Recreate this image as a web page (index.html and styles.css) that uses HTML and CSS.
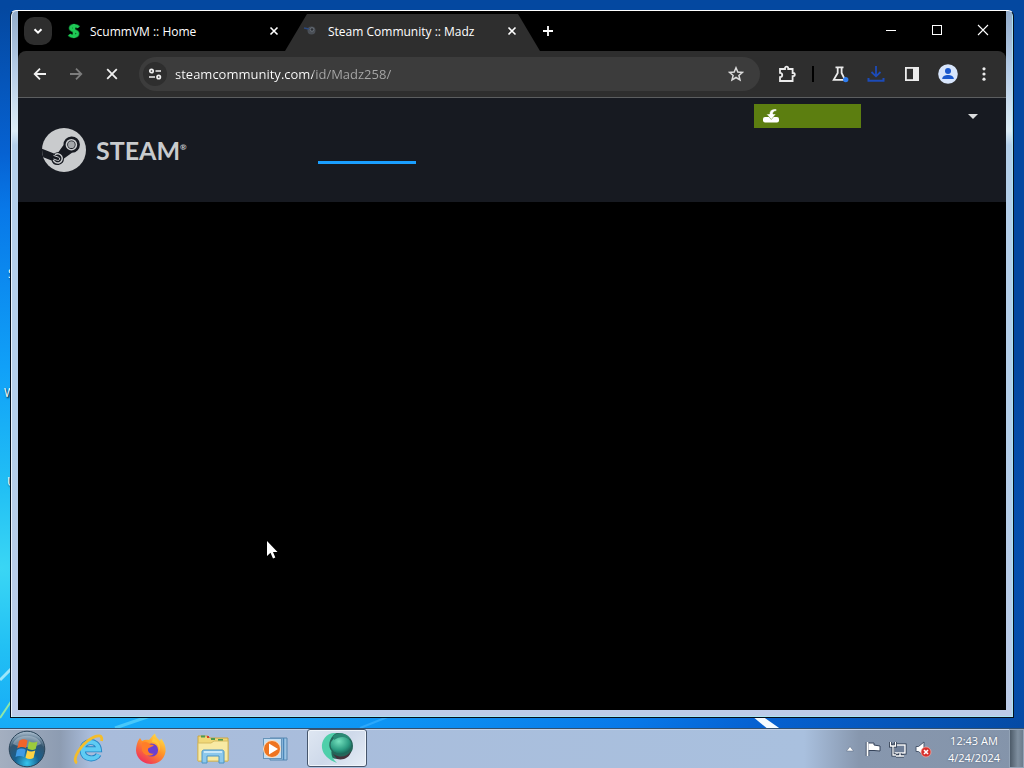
FILE: index.html
```html
<!DOCTYPE html>
<html lang="en">
<head>
  <meta charset="UTF-8">
  <title>Steam Community :: Madz</title>
  <meta name="viewport" content="width=device-width, initial-scale=1.0">
  <link rel="stylesheet" href="styles.css">
</head>
<body>
  <main class="desktop">
    <!-- wallpaper light streaks -->
    <svg class="wallpaper" viewBox="0 0 1024 768" preserveAspectRatio="none" aria-hidden="true">
      <path d="M0 680 L12 668" stroke="#9ce6fa" stroke-width="3"/>
      <path d="M0 718 L12 700" stroke="#8fe8a8" stroke-width="2"/>
      <path d="M115 728 L150 716" stroke="#48c8fa" stroke-width="3"/>
      <path d="M360 728 L390 716" stroke="#2ca8fb" stroke-width="2"/>
      <path d="M752 716 L762 716 L782 730 L769 730 Z" fill="#f4fbff"/>
    </svg>
    <span class="shortcut shortcut-s">S</span>
    <span class="shortcut shortcut-w">W</span>
    <span class="shortcut shortcut-u">U</span>

    <section class="window">
      <div class="browser">
        <div class="tabstrip">
          <button class="tab-search" aria-label="Search tabs">
            <svg width="12" height="12" viewBox="0 0 12 12"><path d="M2.5 4.2 L6 7.7 L9.500 4.2" fill="none" stroke="#fff" stroke-width="2"/></svg>
          </button>
          <div class="tab">
            <svg class="favicon" width="14" height="16" viewBox="0 0 14 16"><path d="M11.500 4.500 C10 2.200 4 1.800 3.600 5 C3.400 8.200 10.800 7.300 10.600 10.700 C10.300 14.200 4 14 2.300 11.500" fill="none" stroke="#0b6b2c" stroke-width="4"/><path d="M11.500 4.500 C10 2.200 4 1.800 3.600 5 C3.400 8.200 10.800 7.300 10.600 10.700 C10.300 14.200 4 14 2.300 11.500 M7 1 V15" fill="none" stroke="#1fc955" stroke-width="2.600"/></svg>
            <span class="tab-title">ScummVM :: Home</span>
            <button class="tab-close" aria-label="Close tab">
              <svg width="10" height="10" viewBox="0 0 10 10"><path d="M1.500 1.500 L8.500 8.500 M8.500 1.500 L1.500 8.500" stroke="#fff" stroke-width="1.600"/></svg>
            </button>
          </div>
          <div class="tab active">
            <svg class="favicon" width="16" height="16" viewBox="0 0 16 16"><circle cx="8.500" cy="7.500" r="4" fill="#4a4f56"/><circle cx="9" cy="6.500" r="1.800" fill="#2c3036" stroke="#6a7078"/><path d="M1 5 L6 6" stroke="#2c4a80" stroke-width="1.500"/></svg>
            <span class="tab-title">Steam Community :: Madz</span>
            <button class="tab-close" aria-label="Close tab">
              <svg width="10" height="10" viewBox="0 0 10 10"><path d="M1.500 1.500 L8.500 8.500 M8.500 1.500 L1.500 8.500" stroke="#fff" stroke-width="1.600"/></svg>
            </button>
          </div>
          <button class="new-tab" aria-label="New tab">
            <svg width="12" height="12" viewBox="0 0 12 12"><path d="M6 1 V11 M1 6 H11" stroke="#fff" stroke-width="1.800"/></svg>
          </button>
          <div class="controls">
            <button aria-label="Minimize"><svg width="12" height="12" viewBox="0 0 12 12"><path d="M1 6.500 H11" stroke="#fff"/></svg></button>
            <button aria-label="Maximize"><svg width="12" height="12" viewBox="0 0 12 12"><rect x="1.500" y="1.500" width="9" height="9" fill="none" stroke="#fff"/></svg></button>
            <button aria-label="Close"><svg width="12" height="12" viewBox="0 0 12 12"><path d="M1 1 L11 11 M11 1 L1 11" stroke="#fff" stroke-width="1.100"/></svg></button>
          </div>
        </div>

        <div class="toolbar">
          <button class="tool" aria-label="Back"><svg width="16" height="16" viewBox="0 0 16 16"><path d="M14 8 H3 M8 2.700 L2.700 8 L8 13.300" fill="none" stroke="#f0f0f0" stroke-width="1.800"/></svg></button>
          <button class="tool" aria-label="Forward"><svg width="16" height="16" viewBox="0 0 16 16"><path d="M2 8 H13 M8 2.700 L13.300 8 L8 13.300" fill="none" stroke="#7c7c7c" stroke-width="1.800"/></svg></button>
          <button class="tool" aria-label="Stop"><svg width="16" height="16" viewBox="0 0 16 16"><path d="M3.200 3.200 L12.800 12.800 M12.800 3.200 L3.200 12.800" stroke="#f0f0f0" stroke-width="1.800"/></svg></button>
          <div class="omnibox">
            <button class="site-info" aria-label="Site information">
              <svg width="14" height="14" viewBox="0 0 14 14" fill="none" stroke="#f0f0f0" stroke-width="1.700"><circle cx="3.500" cy="4" r="1.700"/><path d="M7.500 4 H13 M1 10 H7"/><circle cx="10.700" cy="10" r="1.700"/></svg>
            </button>
            <input class="url" type="text" value="steamcommunity.com/id/Madz258/" aria-label="Address">
            <button class="star" aria-label="Bookmark">
              <svg width="16" height="16" viewBox="0 0 16 16"><path d="M8 1.800 L9.800 6 L14.400 6.400 L10.900 9.400 L12 14 L8 11.500 L4 14 L5.100 9.400 L1.600 6.400 L6.200 6 Z" fill="none" stroke="#dcdcdc" stroke-width="1.500"/></svg>
            </button>
          </div>
          <button class="tool" aria-label="Extensions"><svg width="18" height="18" viewBox="0 0 18 18"><path d="M2 4 H7 V3.200 A1.600 1.600 0 0 1 10.200 3.200 V4 H14.600 V8 H15.200 A1.600 1.600 0 0 1 15.200 11.200 H14.600 V16 H2 V12.200 C5 12 5 8 2 7.800 Z" fill="none" stroke="#ececec" stroke-width="1.800"/></svg></button>
          <span class="separator"></span>
          <button class="tool" aria-label="Labs"><svg width="18" height="18" viewBox="0 0 18 18"><path d="M4.500 2.300 H12.500 M6.700 2.500 V8 L2.700 14.800 H14 L10.600 8 V2.500" fill="none" stroke="#ececec" stroke-width="1.800"/><circle cx="14.700" cy="14.600" r="2.700" fill="#2f7df0"/></svg></button>
          <button class="tool" aria-label="Downloads"><svg width="18" height="18" viewBox="0 0 18 18"><path d="M9 1 V11 M4.500 7 L9 11.300 L13.500 7" fill="none" stroke="#1c4bb8" stroke-width="1.800"/><path d="M1.500 13 V15.800 H16.500 V13" fill="none" stroke="#1c4bb8" stroke-width="2"/></svg></button>
          <button class="tool" aria-label="Side panel"><svg width="16" height="16" viewBox="0 0 16 16"><rect x="1.900" y="1.900" width="12.200" height="12.200" fill="none" stroke="#ececec" stroke-width="1.800"/><rect x="9" y="2" width="5" height="12" fill="#ececec"/></svg></button>
          <button class="tool" aria-label="Profile"><svg width="20" height="20" viewBox="0 0 20 20"><circle cx="10" cy="10" r="9.800" fill="#d8e6fc"/><circle cx="10" cy="7" r="3" fill="#1a58cc"/><path d="M4.200 15 C4.200 9.800 15.800 9.800 15.800 15 Z" fill="#1a58cc"/></svg></button>
          <button class="tool" aria-label="Menu"><svg width="16" height="16" viewBox="0 0 16 16" fill="#ececec"><circle cx="8" cy="2.800" r="1.600"/><circle cx="8" cy="8" r="1.600"/><circle cx="8" cy="13.200" r="1.600"/></svg></button>
        </div>

        <div class="page">
          <header class="site-header">
            <a class="logo" href="#">
              <svg width="44" height="44" viewBox="0 0 44 44">
                <defs><clipPath id="disc"><circle cx="22" cy="22" r="22"/></clipPath></defs>
                <circle cx="22" cy="22" r="22" fill="#c9cbcd"/>
                <g clip-path="url(#disc)" fill="#171a21">
                  <path d="M-2 20 L12 25.500 C13.500 24.500 15 24 16.500 24 L21.500 17 A8.200 8.200 0 1 1 30 24.800 L22 30.500 A6.400 6.400 0 0 1 9.500 32.500 L-2 28 Z"/>
                </g>
                <circle cx="29.400" cy="16.700" r="5" fill="#171a21" stroke="#c9cbcd" stroke-width="1.600"/>
                <circle cx="29.400" cy="16.700" r="3.400" fill="#a4a7aa"/>
                <path d="M13 26.600 A4.600 4.600 0 1 1 11.300 32" fill="none" stroke="#c9cbcd" stroke-width="1.400"/>
                <path d="M11.500 27.400 L16.500 29.200 A1.600 1.600 0 0 1 15.500 32.400 L11.500 31" fill="none" stroke="#c9cbcd" stroke-width="1"/>
              </svg>
              <span class="logo-name">STEAM<sup>®</sup></span>
            </a>
            <nav class="site-nav"><a href="#" aria-label="Community"></a></nav>
            <div class="actions">
              <a class="install" href="#" aria-label="Install Steam">
                <svg width="18" height="16" viewBox="0 0 18 16"><rect x="1" y="9" width="16" height="5.500" rx="2" fill="#fff"/><path d="M14.500 1 C10 0.700 7.500 2.500 7.500 6 H4.500 L9.300 11.500 L14 6 H11 C11 4 12 3 14.500 3 Z" fill="#fff" stroke="#5c7e10" stroke-width="0.500"/></svg>
              </a>
              <button class="account" aria-label="Account menu"></button>
            </div>
          </header>
        </div>
      </div>
    </section>
  </main>

  <footer class="taskbar">
    <button class="start" aria-label="Start">
      <svg width="38" height="38" viewBox="0 0 38 38">
        <defs>
          <radialGradient id="orb" cx="0.5" cy="0.900" r="0.850"><stop offset="0" stop-color="#35c6ee"/><stop offset="0.400" stop-color="#17608f"/><stop offset="0.750" stop-color="#33556f"/><stop offset="1" stop-color="#9db2c4"/></radialGradient>
        </defs>
        <circle cx="19" cy="19" r="17.800" fill="url(#orb)" stroke="#2a4459"/>
        <path d="M5 14 C8 3 30 3 33 14 C26 18 12 18 5 14 Z" fill="#e8f1f8" opacity="0.350"/>
        <path d="M11 11 C14 8.500 17 9 19.500 10.500 L18 18 C15 16.500 12 16.500 9.200 18.500 Z" fill="#f0642a"/>
        <path d="M21 11.300 C24 13 26.500 13 29.500 11.500 L27.700 19 C25 20.500 22 20 19.500 18.500 Z" fill="#9ccb3c"/>
        <path d="M8.900 20 C12 18 15 18.200 17.700 19.800 L16 27 C13 25.500 10 25.500 7.500 27 Z" fill="#3f9be6"/>
        <path d="M19.200 20.300 C22 22 24.500 21.800 27.300 20.500 L25.500 28 C23 29.700 20 29.300 17.500 27.800 Z" fill="#fdd244"/>
      </svg>
    </button>
    <div class="pins">
      <button class="pin" aria-label="Internet Explorer">
        <svg width="32" height="32" viewBox="0 0 32 32"><path d="M25.500 21.500 C23 27 10.500 27.500 9.500 17.500 C9 7 24.500 6 25.800 16.300 H11" fill="none" stroke="#2484c4" stroke-width="6"/><path d="M25.500 21.500 C23 27 10.500 27.500 9.500 17.500 C9 7 24.500 6 25.800 16.300 H11" fill="none" stroke="#5fcbf3" stroke-width="4.200"/><path d="M4 30 C-2 27 8 11 19 5 C25 1.500 30 2 28.500 8" fill="none" stroke="#f4bd2c" stroke-width="2.800"/></svg>
      </button>
      <button class="pin" aria-label="Firefox">
        <svg width="32" height="32" viewBox="0 0 32 32">
          <defs><linearGradient id="fox" x1="0.900" y1="0.100" x2="0.300" y2="1"><stop offset="0" stop-color="#ffe04a"/><stop offset="0.450" stop-color="#ff9328"/><stop offset="1" stop-color="#f0305c"/></linearGradient></defs>
          <path d="M3 8 L5 5 L7 8 C9 7 12 6.500 14 7 C15.500 5.500 17 3 20 0.500 C20.500 4 23 5.500 25 8 L26 5.500 C30 10 31 15 30.500 19 C29 27 23 31 16 31 C8 31 1.500 25.500 1 17.500 C1 13.500 2 10.500 3 8 Z" fill="url(#fox)"/>
          <circle cx="16.500" cy="17" r="6.600" fill="#6b3fd0"/><path d="M7 10 C10 8 13 9 15 11.500 L19 12 C17 14.500 14 14 13 16 C12.500 19 15 21.500 19 20.500 C15 25 8 22 7 17 Z" fill="#ff7d28"/><path d="M17 9 C23 9 25 15 23.500 19 C27 14 24 7 18 5 Z" fill="#ffc83a"/>
        </svg>
      </button>
      <button class="pin" aria-label="Windows Explorer">
        <svg width="34" height="32" viewBox="0 0 34 32"><path d="M2 3 H12 L14 5 H32 V28 H2 Z" fill="#f0d878" stroke="#c9a646"/><path d="M5 3.500 H9 M15 6 H19 M22 7 H27" stroke="#4c9a52" stroke-width="2"/><path d="M11 4 H13" stroke="#d8402c" stroke-width="2"/><path d="M2 10 H15 L18 8 H32 V28 H2 Z" fill="#f8eaa4" stroke="#d6bb60"/><path d="M6 30 V19 C6 17.500 7 17 8 17 H26 C27.500 17 28 18 28 19 V30 H23 V23 H11 V30 Z" fill="#8cc8ec" stroke="#4a94c4"/><path d="M8 19 H26" stroke="#dff3fc" stroke-width="1.500"/></svg>
      </button>
      <button class="pin" aria-label="Windows Media Player">
        <svg width="28" height="28" viewBox="0 0 28 28"><path d="M9 3 H26 V25 H9 Z" fill="#9cc4e4" stroke="#5686b0"/><path d="M22.500 3 V25" stroke="#4a86b8" stroke-width="1.500"/><rect x="2.500" y="3.500" width="18" height="20" fill="#c4def2" stroke="#6694ba"/><circle cx="11" cy="14" r="8.500" fill="#ee7420" stroke="#fbe0c4"/><path d="M8 8.500 L17 14 L8 19.500 Z" fill="#fff"/></svg>
      </button>
      <button class="pin running" aria-label="Browser">
        <svg width="36" height="34" viewBox="0 0 36 34">
          <defs><radialGradient id="ball" cx="0.400" cy="0.300" r="0.800"><stop offset="0" stop-color="#74e0bd"/><stop offset="0.600" stop-color="#2c9c82"/><stop offset="1" stop-color="#145048"/></radialGradient></defs>
          <ellipse cx="19" cy="15" rx="15" ry="13" fill="#24665a"/><path d="M11 19 C15 27 27 28 32 20 C31 27 24 29.500 18 28 Z" fill="#46323c"/><ellipse cx="22" cy="14" rx="10.500" ry="9" fill="url(#ball)"/><path d="M17 2 C8 1 2 9 3 17 C4 24 10 29 18 32 C14 28 12 25 12.500 20 C9 16 9 8 17 2 Z" fill="#4fcfaa"/><path d="M14 5 C20 0 29 2 32 9 C26 5 21 5 15 9 Z" fill="#2a8975"/>
        </svg>
      </button>
    </div>
    <div class="tray">
      <button class="tray-more" aria-label="Show hidden icons"><svg width="8" height="6" viewBox="0 0 8 6"><path d="M4 0.500 L7.500 5 H0.500 Z" fill="#fff" stroke="#55657c" stroke-width="0.500"/></svg></button>
      <button aria-label="Action Center"><svg width="18" height="18" viewBox="0 0 18 18"><path d="M3.500 2 V16" stroke="#35435a" stroke-width="3.500"/><path d="M4 3 H10 V5 L16 6 V11 L10 10.500 H4 Z" fill="#fff" stroke="#35435a"/><path d="M3.500 2 V16" stroke="#fff" stroke-width="1.800"/></svg></button>
      <button aria-label="Network"><svg width="18" height="18" viewBox="0 0 18 18"><rect x="5" y="5" width="11" height="8" fill="#6f7f98" stroke="#26344a" stroke-width="3"/><rect x="5" y="5" width="11" height="8" fill="#6f7f98" stroke="#fff" stroke-width="1.400"/><path d="M7 16 H15 M11 13 V16" stroke="#26344a" stroke-width="3"/><path d="M7 16 H15 M11 13 V16" stroke="#fff" stroke-width="1.400"/><path d="M1.500 2 V6 H6.500 V2 M4 6 V15 H7" fill="none" stroke="#26344a" stroke-width="3"/><path d="M1.500 2 V6 H6.500 V2 M4 6 V15 H7" fill="none" stroke="#fff" stroke-width="1.300"/></svg></button>
      <button aria-label="Volume muted"><svg width="18" height="18" viewBox="0 0 18 18"><path d="M2 6.500 H4.500 L10 2 V16 L4.500 11.500 H2 Z" fill="#fff" stroke="#4a586e"/><circle cx="12" cy="12" r="5" fill="#d8302c" stroke="#f4b0a8" stroke-width="0.700"/><path d="M10 10 L14 14 M14 10 L10 14" stroke="#fff" stroke-width="1.600"/></svg></button>
    </div>
    <div class="clock"><span>12:43 AM</span><span>4/24/2024</span></div>
    <button class="show-desktop" aria-label="Show desktop"></button>
  </footer>

  <!-- mouse pointer -->
  <svg class="pointer" width="12" height="20" viewBox="0 0 12 20" aria-hidden="true"><path d="M1 1 V16 L4.500 12.800 L7 18.500 L9.300 17.500 L7 12 H11.500 Z" fill="#fff"/></svg>
</body>
</html>
```
FILE: styles.css
```css
* {
  box-sizing: border-box;
}

body {
  margin: 0;
  height: 100vh;
  display: flex;
  flex-direction: column;
  overflow: hidden;
  font-family: "Open Sans", "Noto Sans", sans-serif;
  font-size: 12px;
  color: #fff;
  background: radial-gradient(107% 73% at 0% 74%, #3ad6f4 0%, #22c0f4 14%, #10a0f8 36%, #0878e8 64%, #0662d2 74%, #0448a0 100%);
}

button {
  display: flex;
  align-items: center;
  justify-content: center;
  padding: 0;
  border: 0;
  background: none;
  color: inherit;
  flex: none;
}

svg {
  display: block;
  flex: none;
}

/* Desktop */
.desktop {
  flex: 1;
  min-height: 0;
  display: flex;
  padding: 10px;
}

.wallpaper {
  position: absolute;
  left: 0;
  top: 0;
  width: 100%;
  height: 100%;
}

.shortcut {
  position: absolute;
  line-height: 16px;
  text-shadow: 1px 1px 2px #000;
}

.shortcut-s {
  left: 8px;
  top: 266px;
}

.shortcut-w {
  left: 4px;
  top: 385px;
}

.shortcut-u {
  left: 7px;
  top: 474px;
}

/* Window frame */
.window {
  position: relative;
  flex: 1;
  display: flex;
  padding: 0 6px 7px;
  border: 1px solid #06101c;
  border-top-color: #fff;
  border-radius: 6px 6px 0 0;
  background: linear-gradient(180deg, #93acca 0%, #b4cbe6 8%, #dcecf6 17%, #b4cfea 19%, #b4cfea 60%, #bccbe8 100%);
  box-shadow: inset 1px 0 #e8f2fc, inset -1px -1px #a8e4f4;
}

.browser {
  flex: 1;
  min-width: 0;
  display: flex;
  flex-direction: column;
  margin: 0 1px;
  background: #000;
}

/* Tabs */
.tabstrip {
  display: flex;
  align-items: flex-end;
  height: 40px;
  background: #000;
}

.tab-search {
  width: 28px;
  height: 28px;
  margin: 0 0 6px 6px;
  border-radius: 10px;
  background: #2e2e2e;
}

.tab {
  display: flex;
  align-items: center;
  width: 233px;
  height: 37px;
  padding: 0 3px 3px 15px;
}

.tab.active {
  width: 255px;
  padding: 0 20px 3px 18px;
  background: #2e2e2e;
  clip-path: polygon(22px 0, 233px 0, 100% 100%, 0 100%);
}

.tab-title {
  flex: 1;
  margin-left: 9px;
  font-weight: 500;
  white-space: nowrap;
}

.tab-close {
  width: 16px;
  height: 16px;
}

.new-tab {
  width: 16px;
  height: 40px;
}

.controls {
  display: flex;
  align-self: flex-start;
  margin-left: auto;
}

.controls button {
  width: 46px;
  height: 38px;
}

/* Toolbar */
.toolbar {
  display: flex;
  align-items: center;
  gap: 8px;
  height: 47px;
  padding: 0 8px;
  border-bottom: 1px solid #5c5e60;
  border-radius: 8px 8px 0 0;
  background: #2e2e2e;
}

.tool {
  width: 28px;
  height: 28px;
}

.omnibox {
  flex: 1;
  display: flex;
  align-items: center;
  height: 34px;
  margin: 0 5px;
  padding: 0 16px 0 4px;
  border-radius: 17px;
  background: #3c3c3c;
}

.site-info {
  width: 24px;
  height: 24px;
  border-radius: 12px;
  background: #2e2e2e;
}

/* host part is white, the path is dimmed */
.url {
  flex: 1;
  min-width: 0;
  height: 24px;
  margin-left: 8px;
  padding: 0;
  border: 0;
  outline: 0;
  font: 500 13px "Open Sans", "Noto Sans", sans-serif;
  color: #fff;
  background: linear-gradient(90deg, #fff 138px, #a8a8a8 138px);
  -webkit-background-clip: text;
  background-clip: text;
  -webkit-text-fill-color: transparent;
}

.star {
  width: 16px;
  height: 24px;
}

.separator {
  width: 2px;
  height: 16px;
  margin: 0 4px 0 3px;
  background: #000;
}

/* Page */
.page {
  flex: 1;
  background: #000;
}

.site-header {
  display: flex;
  align-items: flex-start;
  height: 104px;
  padding: 0 24px;
  background: #171a21;
}

.logo {
  display: flex;
  align-items: center;
  gap: 10px;
  width: 276px;
  margin-top: 30px;
  color: #c9cbcd;
  text-decoration: none;
}

.logo-name {
  font-family: Lato, sans-serif;
  font-size: 25px;
  font-weight: 700;
  line-height: 44px;
}

.logo-name sup {
  font-size: 8px;
  vertical-align: 10px;
  line-height: 8px;
}

.site-nav a {
  display: block;
  width: 98px;
  height: 66px;
  border-bottom: 3px solid #1a9fff;
}

.actions {
  display: flex;
  align-items: center;
  gap: 107px;
  margin: 6px 4px 0 auto;
}

.install {
  display: flex;
  align-items: center;
  width: 107px;
  height: 24px;
  padding-left: 8px;
  background: #5c7e10;
}

.account {
  border: 5px solid transparent;
  border-top-color: #dcdedf;
  border-bottom: 0;
}

/* Taskbar */
.taskbar {
  position: relative;
  display: flex;
  height: 40px;
  border-top: 1px solid #33506e;
  background: linear-gradient(90deg, #a4afc0 0, #8d9cb2 60px, #a9bcdb 90px, #a9c0de calc(100% - 220px), #8797ae calc(100% - 165px), #8494aa 100%);
  box-shadow: inset 0 1px #c4d2e8;
}

.start {
  width: 38px;
  margin-left: 8px;
}

.pins {
  display: flex;
  gap: 2px;
  margin-left: 13px;
}

.pin {
  width: 60px;
}

.pin.running {
  height: 38px;
  border: 1px solid #46566c;
  border-radius: 3px;
  background: linear-gradient(135deg, #dfe7f2, #ced9ea 50%, #e6edf6);
  box-shadow: inset 0 0 0 1px #f0f5fb;
}

.tray {
  display: flex;
  align-items: center;
  gap: 7px;
  margin-left: auto;
}

.tray-more {
  margin-right: 3px;
}

.clock {
  display: flex;
  flex-direction: column;
  align-items: center;
  justify-content: center;
  width: 70px;
  margin-left: 7px;
  font-size: 11px;
  line-height: 17px;
  text-shadow: 0 0 2px #4a5a70;
}

.show-desktop {
  width: 15px;
  height: 100%;
  border: 1px solid #93a3b6;
  background: linear-gradient(90deg, #4c5a68, #7f8f9f 60%, #6c7c8c);
}

.pointer {
  position: absolute;
  left: 266px;
  top: 540px;
}
```
